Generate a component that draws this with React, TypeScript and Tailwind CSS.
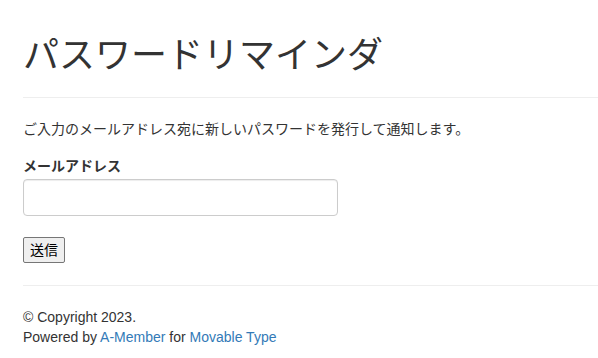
import React from 'react';

const App: React.FC = () => {
  return (
    <div className="min-h-[358px] bg-white pl-[23px] text-[14px] leading-[20px] text-[#333] [font-family:'Liberation_Sans','Noto_Sans_CJK_JP',sans-serif]">
      {/* Page header */}
      <div className="border-b border-[#eee] pt-[36px] pb-[21px]">
        <h1 className="text-[36px] leading-[40px] font-normal text-[#333]">パスワードリマインダ</h1>
      </div>

      {/* Form */}
      <p className="mt-[21px]">ご入力のメールアドレス宛に新しいパスワードを発行して通知します。</p>
      <form className="mt-[17px]" onSubmit={(e) => e.preventDefault()}>
        <label htmlFor="email" className="block font-bold mb-[3px]">
          メールアドレス
        </label>
        <input
          id="email"
          type="email"
          className="block w-[315px] h-[37px] rounded-[4px] border border-[#ccc] px-3 shadow-[inset_0_1px_1px_rgba(0,0,0,0.075)] outline-none"
        />
        <button
          type="submit"
          className="mt-[21px] h-[26px] px-[6px] rounded-[2px] border border-[#767676] bg-[#efefef] text-[14px] leading-[20px] text-black"
        >
          送信
        </button>
      </form>

      {/* Footer */}
      <div className="mt-[22px] border-t border-[#eee] pt-[21px]">
        <p>© Copyright 2023.</p>
        <p>
          Powered by <a href="#" className="text-[#337ab7]">A-Member</a> for{' '}
          <a href="#" className="text-[#337ab7]">Movable Type</a>
        </p>
      </div>
    </div>
  );
};

export default App;
